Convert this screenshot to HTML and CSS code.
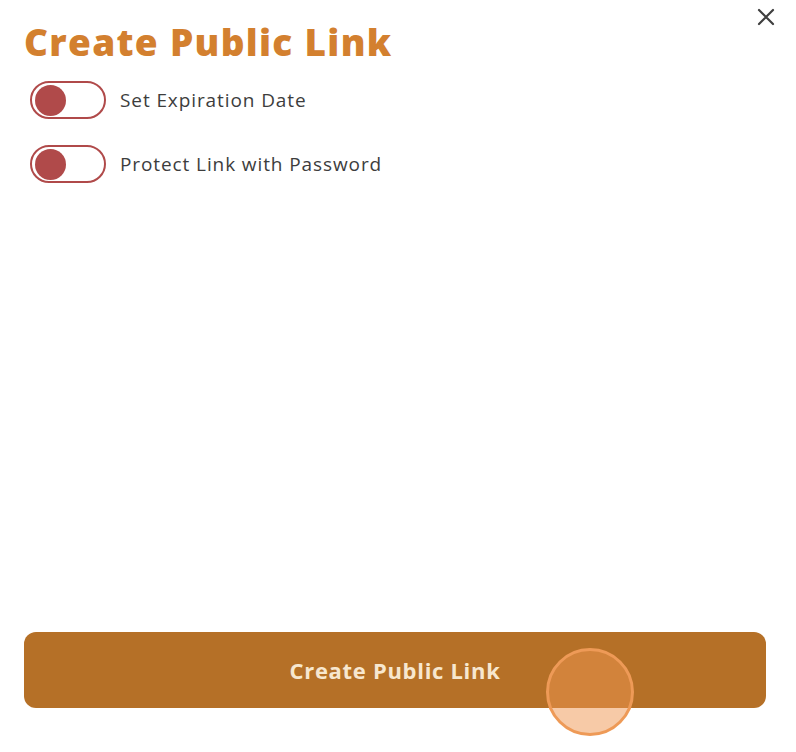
FILE: index.html
```html
<!DOCTYPE html>
<html lang="en">
<head>
    <meta charset="UTF-8">
    <meta name="viewport" content="width=device-width, initial-scale=1.0">
    <title>Create Public Link</title>
    <link rel="stylesheet" href="styles.css">
</head>
<body>

    <div class="sheet">
        <button class="close-btn" aria-label="Close">
            <svg width="18" height="18" viewBox="0 0 18 18">
                <path d="M2 2 L16 16 M16 2 L2 16" stroke="#3f3f3f" stroke-width="2.2" stroke-linecap="round"/>
            </svg>
        </button>

        <h1 class="title">Create Public Link</h1>

        <div class="options">
            <label class="option">
                <span class="toggle"><span class="knob"></span></span>
                <span class="option-text">Set Expiration Date</span>
            </label>
            <label class="option">
                <span class="toggle"><span class="knob"></span></span>
                <span class="option-text">Protect Link with Password</span>
            </label>
        </div>

        <div class="footer">
            <button class="create-btn">Create Public Link</button>
            <!-- touch indicator from the screen recording -->
            <span class="touch-dot"></span>
        </div>
    </div>

</body>
</html>
```

FILE: styles.css
```css
:root {
    --accent: #d3802f;
    --button-bg: #b57027;
    --toggle: #b04a4a;
    --text: #3d3d3d;
}

body {
    margin: 0;
    padding: 0;
    background: #ffffff;
    font-family: 'Open Sans', 'Noto Sans', sans-serif;
}

.sheet {
    position: relative;
    height: 752px;
    box-sizing: border-box;
    padding: 18px 30px 44px 24px;
    display: flex;
    flex-direction: column;
}

.close-btn {
    position: absolute;
    top: 8px;
    right: 21px;
    background: none;
    border: none;
    padding: 0;
    width: 18px;
    height: 18px;
    cursor: pointer;
}

.title {
    margin: 0;
    font-size: 37px;
    font-weight: 800;
    line-height: 48px;
    color: var(--accent);
    letter-spacing: 1.3px;
}

.options {
    display: flex;
    flex-direction: column;
    gap: 26px;
    margin-top: 15px;
    padding-left: 6px;
}

.option {
    display: flex;
    align-items: center;
    gap: 14px;
}

.toggle {
    display: flex;
    align-items: center;
    width: 66px;
    height: 34px;
    border: 2px solid var(--toggle);
    border-radius: 20px;
    padding: 0 3px;
    box-sizing: content-box;
}

.knob {
    width: 31px;
    height: 31px;
    border-radius: 50%;
    background: var(--toggle);
}

.option-text {
    font-size: 19px;
    color: var(--text);
    letter-spacing: 0.9px;
}

.footer {
    margin-top: auto;
    position: relative;
}

.create-btn {
    display: block;
    width: 742px;
    height: 76px;
    border: none;
    border-radius: 12px;
    background: var(--button-bg);
    color: #f7e7cf;
    font-family: inherit;
    font-size: 22px;
    font-weight: 700;
    letter-spacing: 0.7px;
    cursor: pointer;
}

.touch-dot {
    position: absolute;
    left: 522px;
    top: 16px;
    width: 82px;
    height: 82px;
    border-radius: 50%;
    border: 3px solid #ee9a57;
    background: rgba(240, 150, 80, 0.5);
}
```
